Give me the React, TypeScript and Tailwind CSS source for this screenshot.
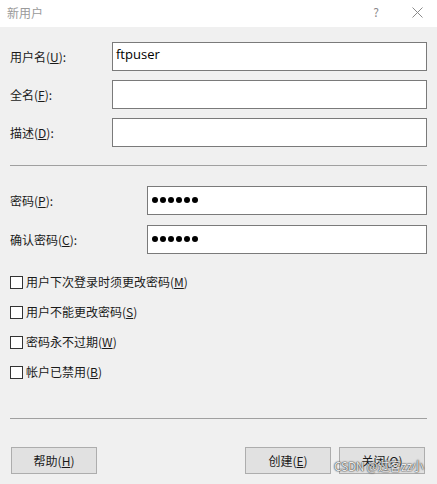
import React from 'react';

const font = { fontFamily: '"Noto Sans CJK SC", "Liberation Sans", sans-serif' };

function Label({ text, k, width }: { text: string; k: string; width: string }) {
  return (
    <div className={`${width} shrink-0 text-[12px] text-[#1a1a1a] pl-[0px]`}>
      {text}(<u>{k}</u>):
    </div>
  );
}

function Field({ label, k, width, value, password }: { label: string; k: string; width: string; value?: string; password?: boolean }) {
  return (
    <div className="flex items-center h-[29px]">
      <Label text={label} k={k} width={width} />
      <div className="flex-1 h-[29px] bg-white border border-[#7a7a7a] flex items-center px-[3px]">
        {password ? (
          <div className="flex gap-[2px] -mt-[2px] pl-[1px]">
            {[0, 1, 2, 3, 4, 5].map((i) => (
              <span key={i} className="w-[6px] h-[6px] rounded-full bg-black" />
            ))}
          </div>
        ) : (
          <span className="text-[13px] text-black -mt-[4px]" style={{ fontFamily: '"Open Sans", "Noto Sans", sans-serif' }}>{value}</span>
        )}
      </div>
    </div>
  );
}

function Check({ text, k }: { text: string; k: string }) {
  return (
    <div className="flex items-center h-[30px] gap-[3px]">
      <span className="w-[13px] h-[13px] border border-[#333] bg-white shrink-0" />
      <span className="text-[12px] text-[#1a1a1a]">
        {text}(<u>{k}</u>)
      </span>
    </div>
  );
}

function Btn({ text, k }: { text: string; k: string }) {
  return (
    <div className="w-[86px] h-[27px] bg-[#e1e1e1] border border-[#adadad] flex items-center justify-center text-[12px] text-[#1a1a1a]">
      {text}(<u>{k}</u>)
    </div>
  );
}

export default function App() {
  return (
    <div className="w-[437px] h-[484px] bg-[#f0f0f0] flex flex-col relative overflow-hidden" style={font}>
      <div className="h-[27px] bg-white flex items-center justify-between pl-[7px] pr-[14px]">
        <span className="text-[12px] text-[#9a9a9a] -mt-[2px]">新用户</span>
        <div className="flex items-center gap-[33px] text-[#8a8a8a]">
          <span className="text-[12px] -mt-[4px]">?</span>
          <svg width="11" height="11" viewBox="0 0 11 11" className="-mt-[3px]">
            <path d="M0.5 0.5 L10.5 10.5 M10.5 0.5 L0.5 10.5" stroke="#8a8a8a" strokeWidth="1" />
          </svg>
        </div>
      </div>

      <div className="flex flex-col px-[10px] pt-[15px]">
        <div className="flex flex-col gap-[9px]">
          <Field label="用户名" k="U" width="w-[102px]" value="ftpuser" />
          <Field label="全名" k="F" width="w-[102px]" />
          <Field label="描述" k="D" width="w-[102px]" />
        </div>

        <div className="h-px bg-[#a0a0a0] mt-[18px]" />

        <div className="flex flex-col gap-[10px] mt-[20px]">
          <Field label="密码" k="P" width="w-[137px]" password />
          <Field label="确认密码" k="C" width="w-[137px]" password />
        </div>

        <div className="flex flex-col mt-[13px]">
          <Check text="用户下次登录时须更改密码" k="M" />
          <Check text="用户不能更改密码" k="S" />
          <Check text="密码永不过期" k="W" />
          <Check text="帐户已禁用" k="B" />
        </div>

        <div className="h-px bg-[#a0a0a0] mt-[31px]" />

        <div className="flex items-center mt-[28px] pl-[1px] pr-[2px]">
          <Btn text="帮助" k="H" />
          <div className="flex-1" />
          <div className="flex gap-[8px]">
            <Btn text="创建" k="E" />
            <Btn text="关闭" k="O" />
          </div>
        </div>
      </div>

      <span
        className="absolute left-[334px] top-[457px] text-[12px] text-white/90 tracking-tight"
        style={{ textShadow: '0 0 2px #333, 0 0 1px #000' }}
      >
        CSDN @过客zz小
      </span>
    </div>
  );
}
